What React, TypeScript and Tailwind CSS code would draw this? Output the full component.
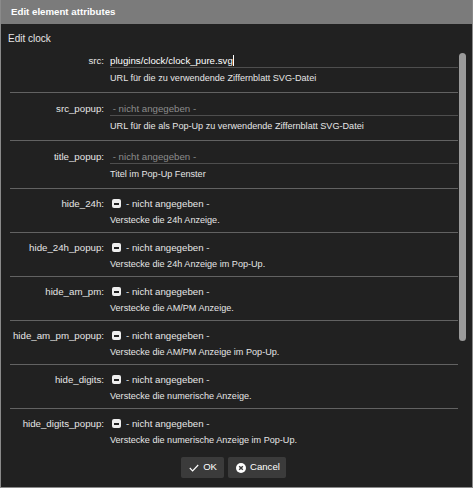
import React from "react";

type Row =
  | { kind: "text"; label: string; value?: string; desc: string }
  | { kind: "check"; label: string; desc: string };

const rows: Row[] = [
  { kind: "text", label: "src:", value: "plugins/clock/clock_pure.svg", desc: "URL für die zu verwendende Ziffernblatt SVG-Datei" },
  { kind: "text", label: "src_popup:", desc: "URL für die als Pop-Up zu verwendende Ziffernblatt SVG-Datei" },
  { kind: "text", label: "title_popup:", desc: "Titel im Pop-Up Fenster" },
  { kind: "check", label: "hide_24h:", desc: "Verstecke die 24h Anzeige." },
  { kind: "check", label: "hide_24h_popup:", desc: "Verstecke die 24h Anzeige im Pop-Up." },
  { kind: "check", label: "hide_am_pm:", desc: "Verstecke die AM/PM Anzeige." },
  { kind: "check", label: "hide_am_pm_popup:", desc: "Verstecke die AM/PM Anzeige im Pop-Up." },
  { kind: "check", label: "hide_digits:", desc: "Verstecke die numerische Anzeige." },
  { kind: "check", label: "hide_digits_popup:", desc: "Verstecke die numerische Anzeige im Pop-Up." },
];

function Checkbox() {
  return (
    <span className="w-[9px] h-[9px] rounded-[2px] bg-[#eeeeee] flex items-center justify-center shrink-0">
      <span className="w-[5px] h-[2px] bg-[#222222]" />
    </span>
  );
}

export default function App() {
  return (
    <div
      className="w-[473px] h-[488px] flex flex-col bg-[#212121] border border-[#8a8a8a] border-t-0 overflow-hidden text-[#e6e6e6]"
      style={{ fontFamily: '"Liberation Sans", Arial, sans-serif' }}
    >
      <div className="h-[24px] shrink-0 bg-[#7b7b7b] flex items-center px-[10px] text-[9.7px] font-bold text-white">
        Edit element attributes
      </div>
      <div className="pl-[7px] pt-[8px] text-[10px] leading-[13px] shrink-0">Edit clock</div>
      <div className="flex-1 flex min-h-0 overflow-hidden">
        <div className="flex-1 pl-[9px] min-w-0 overflow-hidden">
          {rows.map((r, i) => (
            <div
              key={r.label}
              className={
                "grid grid-cols-[94px_1fr] gap-x-[6px] " +
                (i < rows.length - 1 ? "border-b border-[#626262] " : "") +
                (r.kind === "text" ? "h-[48px]" : "h-[44px]")
              }
            >
              <div className={"text-right text-[9.7px] leading-[13px] whitespace-nowrap " + (r.kind === "text" ? "pt-[9px]" : "pt-[8px]")}>
                {r.label}
              </div>
              <div className="flex flex-col min-w-0">
                {r.kind === "text" ? (
                  <div className="h-[23px] border-b border-[#4e4e4e] pt-[9px] text-[9.7px] leading-[13px] whitespace-nowrap">
                    {r.value ? (
                      <span className="text-white">
                        {r.value}
                        <span className="inline-block w-[1px] h-[11px] bg-white align-[-2px]" />
                      </span>
                    ) : (
                      <span className="text-[#8c8c8c]">&nbsp;- nicht angegeben -</span>
                    )}
                  </div>
                ) : (
                  <div className="h-[22px] pt-[8px] pl-[2px] flex items-start gap-[5px] text-[9.7px] leading-[13px] whitespace-nowrap">
                    <span className="pt-[2px]">
                      <Checkbox />
                    </span>
                    <span>- nicht angegeben -</span>
                  </div>
                )}
                <div className={"text-[9.1px] leading-[12px] whitespace-nowrap " + (r.kind === "text" ? "pt-[4px]" : "pt-[3px]")}>
                  {r.desc}
                </div>
              </div>
            </div>
          ))}
        </div>
        <div className="w-[14px] shrink-0 pl-[1px] pt-[8px]">
          <div className="w-[7px] h-[288px] rounded-full bg-[#9a9a9a]" />
        </div>
      </div>
      <div className="shrink-0 flex justify-center gap-[4px] pt-[6px] pb-[9px] pr-[6px]">
        <button className="h-[21px] pl-[8px] pr-[7px] rounded-[2px] bg-[#3b3b3b] flex items-center gap-[4px] text-[9.6px] text-white">
          <svg width="10" height="8" viewBox="0 0 10 8" fill="none">
            <path d="M0.8 4 L3.6 6.8 L9.2 1" stroke="white" strokeWidth="1.2" />
          </svg>
          OK
        </button>
        <button className="h-[21px] pl-[8px] pr-[6px] rounded-[2px] bg-[#3b3b3b] flex items-center gap-[4px] text-[9.6px] text-white">
          <svg width="10" height="10" viewBox="0 0 11 11">
            <circle cx="5.5" cy="5.5" r="5.5" fill="white" />
            <path d="M3.5 3.5 L7.5 7.5 M7.5 3.5 L3.5 7.5" stroke="#3b3b3b" strokeWidth="1.6" />
          </svg>
          Cancel
        </button>
      </div>
    </div>
  );
}
